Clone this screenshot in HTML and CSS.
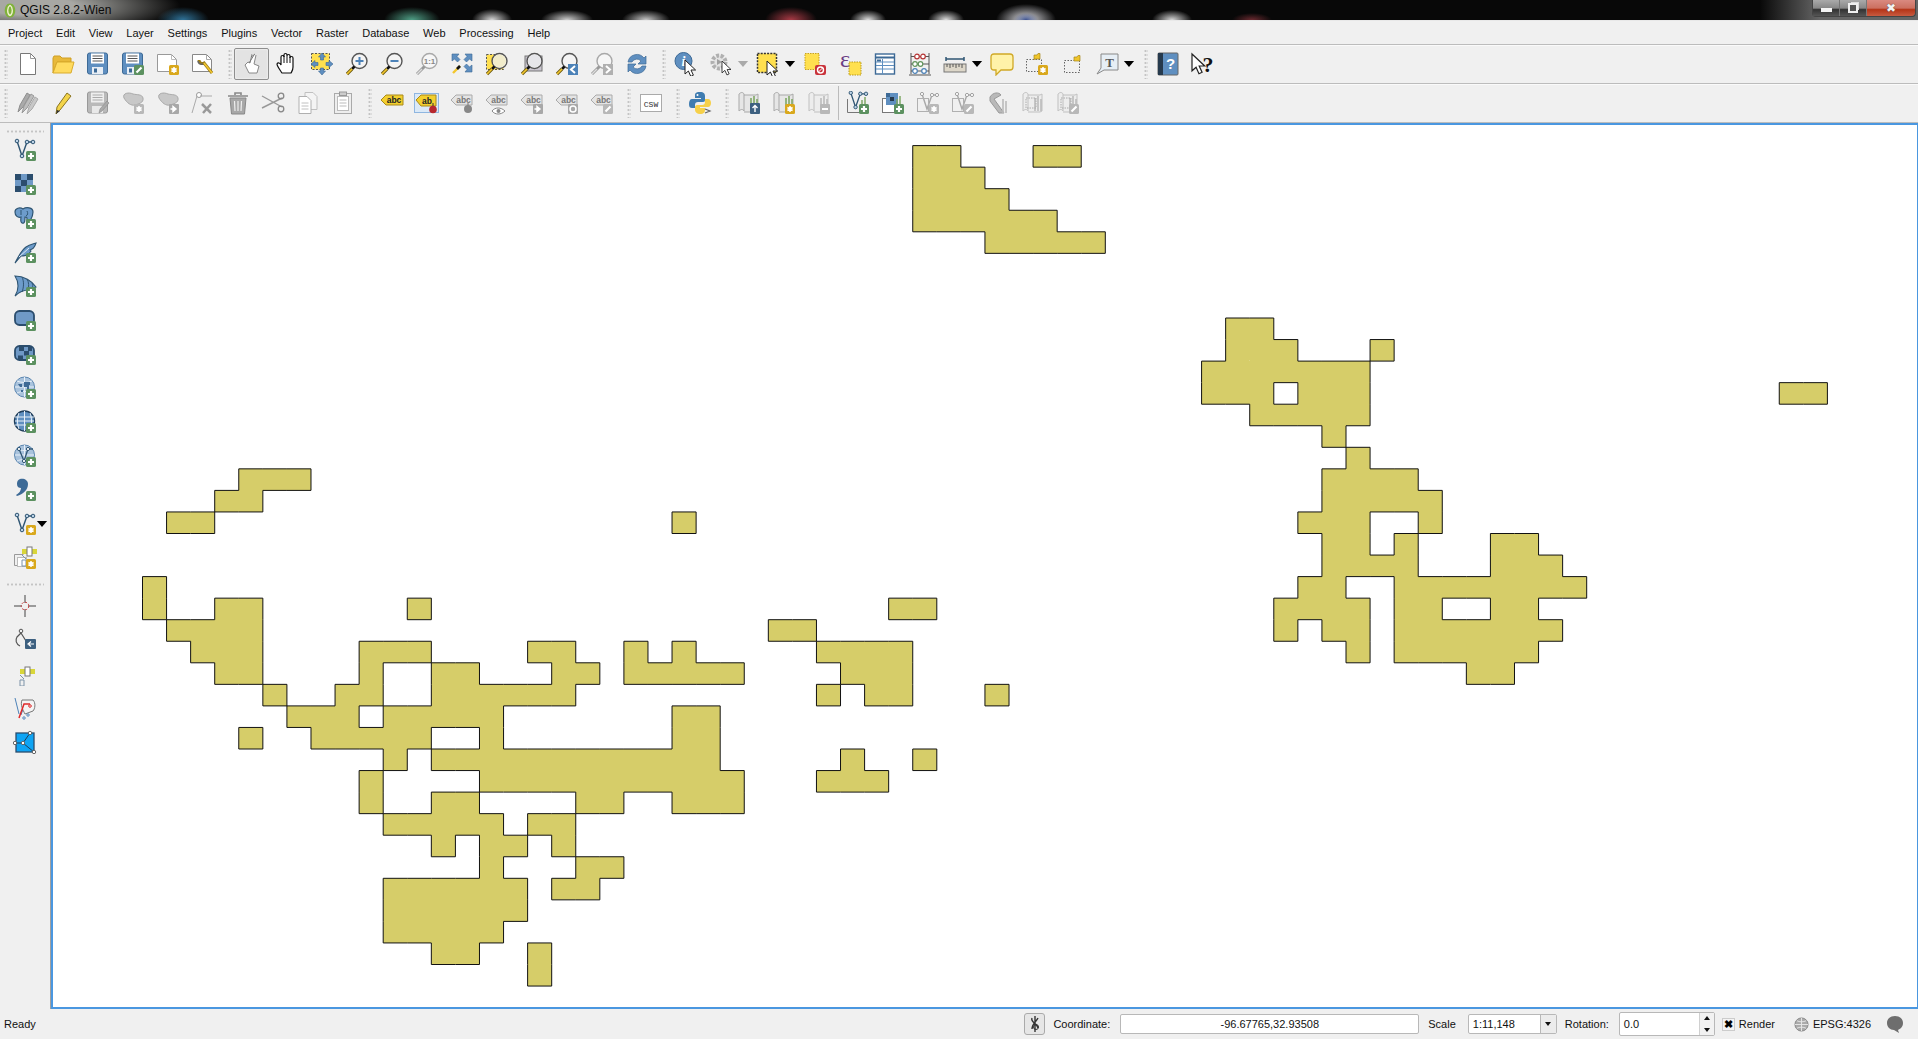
FILE: index.html
```html
<!DOCTYPE html>
<html lang="en">
<head>
    <meta charset="UTF-8">
    <title>QGIS 2.8.2-Wien</title>
    <link rel="stylesheet" href="styles.css">
</head>
<body>
<!-- shared icon parts -->
<svg class="defs" xmlns="http://www.w3.org/2000/svg">
  <defs>
    <g id="b-plus"><rect x="13" y="13" width="10" height="10" rx="1.5" fill="#5c9160"/><path d="M18 15v6M15 18h6" stroke="#fff" stroke-width="2.2"/></g>
    <g id="b-star"><rect x="13" y="13" width="10" height="10" rx="1.5" fill="#d9a81c"/><path d="M18 15v6M15.4 16.5l5.2 3M15.4 19.5l5.2-3" stroke="#fff" stroke-width="1.5"/></g>
    <g id="b-star-off"><rect x="13" y="13" width="10" height="10" rx="1.5" fill="#b8b8b8"/><path d="M18 15v6M15.4 16.5l5.2 3M15.4 19.5l5.2-3" stroke="#fff" stroke-width="1.5"/></g>
    <g id="b-pen-off"><rect x="13" y="13" width="10" height="10" rx="1.5" fill="#b8b8b8"/><path d="M15.5 20.5l5-5" stroke="#fff" stroke-width="2.2"/></g>
    <g id="b-arrow-off"><rect x="13" y="13" width="10" height="10" rx="1" fill="#a8a8a8"/><path d="M14.5 18h4M17 15.5l3 2.5-3 2.5z" stroke="#fff" fill="#fff" stroke-width="1.4"/></g>
    <g id="p-glass"><circle cx="14.5" cy="9" r="7.5" fill="#f4f4f4" stroke="#555" stroke-width="1.4"/><path d="M9.5 14.5L7 17" stroke="#111" stroke-width="2.6"/><path d="M7 17l-5 5" stroke="#6d5a10" stroke-width="3.2"/><path d="M7 17l-5 5" stroke="#f3c72e" stroke-width="1.6"/></g>
    <g id="p-glass-off"><circle cx="14.5" cy="9" r="7.5" fill="#f6f6f6" stroke="#a8a8a8" stroke-width="1.4"/><path d="M9.5 14.5L2 22" stroke="#999" stroke-width="3"/><path d="M7 17l-5 5" stroke="#ddd" stroke-width="1.4"/></g>
    <g id="p-cursor"><path d="M0 0v14l3.4-3 2.4 5.4 2.6-1.2-2.4-5.2h4.6z" fill="#fff" stroke="#222" stroke-width="1"/></g>
    <g id="p-floppy"><rect x="1.5" y="1" width="20" height="21" rx="2" fill="#5f8fc0" stroke="#3d6a96"/><rect x="5" y="1.5" width="13" height="10" fill="#fff"/><path d="M6.5 4h10M6.5 6.500h10M6.500 9h10" stroke="#555"/><rect x="6" y="15" width="11" height="7" fill="#e8eef5"/><rect x="8" y="16.500" width="3" height="4" fill="#3d6a96"/></g>
    <g id="p-floppy-off"><rect x="1.500" y="1" width="20" height="21" rx="2" fill="#b9b9b9" stroke="#999"/><rect x="5" y="1.500" width="13" height="10" fill="#eee"/><path d="M6.500 4h10M6.500 6.500h10M6.500 9h10" stroke="#aaa"/><rect x="6" y="15" width="11" height="7" fill="#e8e8e8"/></g>
    <g id="p-blob"><path d="M3 7C1 2 8 1 12 3c4 1 9 0 10 4 1 5-5 6-8 7-4 1-8-2-11-7z" fill="#c8c8c8" stroke="#aaa"/></g>
    <g id="p-tag"><path d="M1 9l5-5h16v10H6z" fill="#e4e4e4" stroke="#aaa"/><text x="13.500" y="12.200" class="ic-abc ic-off">abc</text></g>
    <g id="p-scroll"><path d="M2 3c2-2 4-2 5 0v17c-1-2-3-2-5 0zM7 4h12l2-1v17l-2 1H7" fill="#e6e6e6" stroke="#a8a8a8"/><path d="M14 20V7M17 20V5M20 20V8" stroke="#7fa865" stroke-width="1.6"/></g>
    <g id="p-scroll-off"><path d="M2 3c2-2 4-2 5 0v17c-1-2-3-2-5 0zM7 4h12l2-1v17l-2 1H7" fill="#ededed" stroke="#c0c0c0"/><path d="M14 20V7M17 20V5M20 20V8" stroke="#bbb" stroke-width="1.6"/></g>
    <g id="p-dash"><rect x="1.500" y="7.500" width="15" height="12" fill="none" stroke="#666" stroke-dasharray="1.500 1.500"/></g>
    <g id="p-node"><path d="M4 3l5 15 5-14h6" fill="none" stroke="#2f5573" stroke-width="1.4"/><circle cx="4" cy="3" r="1.800" fill="#bcd2e6" stroke="#2f5573"/><circle cx="9" cy="18" r="1.800" fill="#bcd2e6" stroke="#2f5573"/><circle cx="14" cy="4" r="1.800" fill="#bcd2e6" stroke="#2f5573"/><circle cx="20" cy="4" r="1.800" fill="#bcd2e6" stroke="#2f5573"/></g>
    <g id="p-node-off"><path d="M6 3l5 15 5-14h5" fill="none" stroke="#a8a8a8" stroke-width="1.400"/><rect x="1.500" y="7.500" width="11" height="13" fill="none" stroke="#b0b0b0"/><circle cx="6" cy="3" r="1.600" fill="#fff" stroke="#a0a0a0"/><circle cx="16" cy="4" r="1.600" fill="#fff" stroke="#a0a0a0"/><circle cx="21" cy="4" r="1.600" fill="#fff" stroke="#a0a0a0"/></g>
    <g id="p-globe"><circle cx="11.500" cy="11" r="10" fill="#a9c3dd" stroke="#5b86b0"/><path d="M2 11h19M11.500 1v20M4 5c4 2 11 2 15 0M4 17c4-2 11-2 15 0" stroke="#e8f0f8" fill="none"/></g>
    <g id="p-bars"><rect x="4" y="3" width="15" height="5" fill="#d9d63a"/><rect x="9" y="1" width="5" height="9" fill="#fff" stroke="#777"/><path d="M4 9l4 4M4 14h4v6H4z" fill="none" stroke="#7d93a8"/></g>

    <!-- main toolbar -->
    <g id="i-new"><path d="M4.500 1.500h10l5 5v16h-15z" fill="#fff" stroke="#777"/><path d="M14.500 1.500v5h5" fill="none" stroke="#999"/></g>
    <g id="i-open"><path d="M2 21V6l1-2h6l2 2h9v4H6z" fill="#e8b93a" stroke="#cf9f25"/><path d="M2 21l4-11h17l-3 11z" fill="#ffdb5f" stroke="#d9ab2c"/></g>
    <g id="i-save"><use href="#p-floppy"/></g>
    <g id="i-saveas"><use href="#p-floppy"/><rect x="13" y="13" width="10" height="10" rx="1.500" fill="#5c9160"/><path d="M15.500 20.500l5-5" stroke="#fff" stroke-width="2.200"/></g>
    <g id="i-composer"><path d="M1.500 2.500h14l5 5v12h-19z" fill="#fff" stroke="#999"/><path d="M15.500 2.500v5h5" fill="none" stroke="#bbb"/><use href="#b-star"/></g>
    <g id="i-manager"><path d="M1.500 2.500h14l5 5v12h-19z" fill="#fff" stroke="#888"/><path d="M15.500 2.500v5h5" fill="none" stroke="#aaa"/><path d="M8 8c0 3 3 4 5 3l8 10" fill="none" stroke="#9a7c1a" stroke-width="3"/><path d="M13 11l8 10" stroke="#f3c72e" stroke-width="1.600"/><path d="M7 9c0 2 2 4 5 3" fill="none" stroke="#666" stroke-width="1.500"/></g>
    <g id="i-touch"><path d="M12 2l-2 9-2-1-3 3 4 8h8l2-7-5-2 2-9" fill="#fff" stroke="#888"/><path d="M9 11l5-8M11 5l4-3" stroke="#777" fill="none"/></g>
    <g id="i-pan"><path d="M7 21c-2-3-5-7-5-9 1-2 3-1 4 1V5c0-2 3-2 3 0V3c0-2 3-2 3 0v1c0-2 3-2 3 0v2c0-2 3-2 3 0v9c0 3-1 4-2 6z" fill="#fff" stroke="#111" stroke-width="1.200"/><path d="M9 4v7M12 4v7M15 5v6" stroke="#111"/></g>
    <g id="i-pansel"><rect x="1.500" y="1.500" width="18" height="16" fill="#ffe04f" stroke="#555" stroke-dasharray="2 1.500"/><path d="M12 1l3.500 4h-2v3h-3V5h-2zM12 23l3.500-4h-2v-3h-3v3h-2zM1 12l4-3.500v2h3v3H5v2zM23 12l-4-3.500v2h-3v3h3v2z" fill="#5f8fc0" stroke="#3d6a96" stroke-width=".6"/></g>
    <g id="i-zoomin"><use href="#p-glass"/><path d="M14.500 5v8M10.500 9h8" stroke="#4c82b8" stroke-width="2"/></g>
    <g id="i-zoomout"><use href="#p-glass"/><path d="M10.500 9h8" stroke="#4c82b8" stroke-width="2"/></g>
    <g id="i-zoom11"><use href="#p-glass-off"/><text x="14.500" y="12" class="ic-tiny ic-off">1:1</text></g>
    <g id="i-zoomfull"><path d="M2 2h7L7 4.500l3 3L7.500 10l-3-3L2 9zM22 2h-7l2 2.500-3 3 2.500 2.500 3-3L22 9zM22 20h-7l2-2.500-3-3 2.500-2.500 3 3L22 13z" fill="#5f8fc0" stroke="#3d6a96" stroke-width=".6"/><path d="M10 14l-7 7" stroke="#f3c72e" stroke-width="2.400"/><path d="M10 14l-3 3" stroke="#111" stroke-width="2.600"/></g>
    <g id="i-zoomsel"><rect x="1.500" y="2.500" width="17" height="15" fill="#ffe04f" stroke="#555" stroke-dasharray="2 1.500"/><use href="#p-glass"/><circle cx="14.500" cy="9" r="6.500" fill="#f1eccb"/></g>
    <g id="i-zoomlayer"><rect x="5" y="4" width="17" height="15" fill="#c9c5cf" stroke="#777"/><use href="#p-glass"/><circle cx="14.500" cy="9" r="6.500" fill="#e6e6ea"/></g>
    <g id="i-zoomlast"><use href="#p-glass"/><rect x="13" y="12" width="10" height="11" fill="#4c82b8"/><path d="M20 14l-4 3.500 4 3.500" fill="none" stroke="#fff" stroke-width="2"/></g>
    <g id="i-zoomnext"><use href="#p-glass-off"/><rect x="13" y="12" width="10" height="11" fill="#b0b0b0"/><path d="M16 14l4 3.500-4 3.500" fill="none" stroke="#fff" stroke-width="2"/></g>
    <g id="i-refresh"><path d="M3 10a9 9 0 0 1 16-4l2-2v8h-8l3-3a5.500 5.500 0 0 0-9 1z" fill="#5f8fc0" stroke="#3d6a96" stroke-width=".7"/><path d="M21 14a9 9 0 0 1-16 4l-2 2v-8h8l-3 3a5.500 5.500 0 0 0 9-1z" fill="#5f8fc0" stroke="#3d6a96" stroke-width=".7"/></g>
    <g id="i-identify"><circle cx="9.500" cy="9" r="8.500" fill="#5f8fc0" stroke="#3d6a96"/><text x="9.500" y="14" class="ic-info">i</text><use href="#p-cursor" transform="translate(11 8)"/></g>
    <g id="i-action"><circle cx="10" cy="10" r="6.500" fill="#e4e4e4" stroke="#b0b0b0" stroke-width="4" stroke-dasharray="3 1.500"/><path d="M8 7l5 3-5 3z" fill="#a0a0a0"/><use href="#p-cursor" transform="translate(13 9) scale(.85)"/></g>
    <g id="i-select"><rect x="1.500" y="1.500" width="19" height="19" fill="#ffe04f" stroke="#333" stroke-width="1.500" stroke-dasharray="2 1.200"/><use href="#p-cursor" transform="translate(11 9)"/></g>
    <g id="i-deselect"><rect x="2" y="1.500" width="14" height="16" fill="#ffe04f" stroke="#c9a21c" stroke-dasharray="1.500 1"/><rect x="12" y="13" width="11" height="10" rx="2" fill="#c9333b"/><circle cx="17.500" cy="18" r="3" fill="none" stroke="#fff" stroke-width="1.400"/><path d="M15.500 20l4-4" stroke="#fff"/></g>
    <g id="i-expr"><rect x="11" y="10" width="12" height="13" fill="#ffe04f" stroke="#b99a1f" stroke-dasharray="1.500 1"/><text x="7" y="15" class="ic-eps">&#949;</text></g>
    <g id="i-table"><rect x="2.500" y="2" width="19" height="20" fill="#fff" stroke="#3d6a96" stroke-width="1.400"/><path d="M3 5.500h18" stroke="#3d6a96" stroke-width="2"/><path d="M3 10h18M3 13.500h18M3 17h18M9.500 7v15" stroke="#5f8fc0"/><rect x="4" y="7.500" width="4" height="2" fill="#3d6a96"/></g>
    <g id="i-calc"><path d="M3 1v21M21 1v21M1 23h22M3 4.500h18M3 12h18M3 19h18" stroke="#555" fill="none"/><circle cx="9" cy="4.500" r="2.300" fill="#fff" stroke="#b53535" stroke-width="1.200"/><circle cx="15" cy="4.500" r="2.300" fill="#fff" stroke="#b53535" stroke-width="1.200"/><circle cx="7" cy="12" r="2.300" fill="#fff" stroke="#63955e" stroke-width="1.200"/><circle cx="12.500" cy="12" r="2.300" fill="#fff" stroke="#63955e" stroke-width="1.200"/><circle cx="7" cy="19" r="2.300" fill="#fff" stroke="#4c82b8" stroke-width="1.200"/><circle cx="16" cy="19" r="2.300" fill="#fff" stroke="#4c82b8" stroke-width="1.200"/></g>
    <g id="i-measure"><path d="M3 5v4M21 5v4M3 7h18" stroke="#2f5573" stroke-width="1.500"/><rect x="1" y="12" width="22" height="8" fill="#ddd7c9" stroke="#777"/><path d="M4 12v3M7 12v4M10 12v3M13 12v4M16 12v3M19 12v4" stroke="#555"/></g>
    <g id="i-tip"><path d="M4 2h16q3 0 3 3v10q0 3-3 3h-9l-5 5v-5H4q-3 0-3-3V5q0-3 3-3z" fill="#fff2a8" stroke="#d0a826" stroke-width="1.300"/></g>
    <g id="i-newbook"><use href="#p-dash"/><path d="M9 8V3h3l1-1.500h2V7H9z" fill="#f0c52a" stroke="#a8861a" stroke-width=".7"/><use href="#b-star"/></g>
    <g id="i-book"><use href="#p-dash" transform="translate(3 1)"/><path d="M14 9V5h3l1-1.500h2V9z" fill="#f0c52a" stroke="#a8861a" stroke-width=".7"/></g>
    <g id="i-annot"><path d="M6 2h17v16H9l-7 4 4-6z" fill="#e6eef5" stroke="#888"/><text x="14.500" y="14.500" class="ic-t">T</text></g>
    <g id="i-help"><rect x="2" y="1" width="20" height="22" rx="1" fill="#5f8fc0" stroke="#666"/><rect x="2" y="1" width="5" height="22" fill="#263a4d"/><text x="14.500" y="17" class="ic-help">?</text></g>
    <g id="i-what"><use href="#p-cursor" transform="translate(1 2) scale(1.200)"/><text x="17" y="20" class="ic-what">?</text></g>

    <!-- digitising and label toolbar -->
    <g id="i-edits"><path d="M2 21l2-7 7-12 3 2-7 12z" fill="#aaa" stroke="#8e8e8e"/><path d="M6 22l2-7 7-12 3 2-7 12z" fill="#bdbdbd" stroke="#999"/><path d="M11 23l2-7 6-10 3 2-6 10z" fill="#c8c8c8" stroke="#aaa"/></g>
    <g id="i-pencil"><path d="M5 23l1-7L16 2l4 3L9 19z" fill="#f3d44a" stroke="#8a7420"/><path d="M5 23l1-4 3 1z" fill="#333"/></g>
    <g id="i-saveedit"><use href="#p-floppy-off"/><path d="M13 22l1-4 7-8 2 2-7 8z" fill="#aaa" stroke="#888" stroke-width=".6"/></g>
    <g id="i-addfeat"><use href="#p-blob"/><use href="#b-star-off"/></g>
    <g id="i-movefeat"><use href="#p-blob"/><use href="#b-arrow-off"/></g>
    <g id="i-nodetool"><path d="M6 5l-5 17" stroke="#aaa"/><circle cx="8" cy="4" r="2.500" fill="#fff" stroke="#999"/><path d="M9 5h12" stroke="#aaa"/><path d="M11 13l9 9M20 13l-8 9" stroke="#999" stroke-width="2.500"/></g>
    <g id="i-trash"><path d="M4 7h16l-1.500 16h-13z" fill="#a8a8a8" stroke="#888"/><path d="M2 5h20M9 4V2h6v2" fill="none" stroke="#888" stroke-width="1.600"/><path d="M8.500 10l.5 10M12 10v10M15.500 10l-.5 10" stroke="#eee" stroke-width="1.200"/></g>
    <g id="i-cut"><path d="M1 5l20 11M1 17L21 7" stroke="#999" stroke-width="1.400"/><circle cx="20" cy="18" r="2.800" fill="none" stroke="#888" stroke-width="1.300"/><circle cx="20" cy="5" r="2.800" fill="none" stroke="#888" stroke-width="1.300"/></g>
    <g id="i-copy"><path d="M9 1.500h8l4 4v13H9z" fill="#f4f4f4" stroke="#c0c0c0"/><path d="M3 5.500h8l4 4v13H3z" fill="#fff" stroke="#b0b0b0"/><path d="M5.500 12h7M5.500 15h7M5.500 18h7" stroke="#c0c0c0"/></g>
    <g id="i-paste"><rect x="3.500" y="2.500" width="17" height="20" fill="#eee" stroke="#aaa"/><rect x="6.500" y="5.500" width="11" height="14" fill="#fff" stroke="#bbb"/><rect x="8.500" y="1" width="7" height="3.500" fill="#ccc" stroke="#999"/><path d="M8.500 9h7M8.500 12h7M8.500 15h7" stroke="#bbb"/></g>
    <g id="i-label"><path d="M1 9l5-5h17v10H6z" fill="#f3cf2e" stroke="#a8891a"/><text x="14" y="12.200" class="ic-abc">abc</text></g>
    <g id="i-pin"><path d="M1 9l5-5h15v11H6z" fill="#f3cf2e" stroke="#a8891a"/><text x="12" y="12.500" class="ic-abc">ab</text><path d="M18 12v4" stroke="#333"/><circle cx="18" cy="18.500" r="3.800" fill="#b8282e"/></g>
    <g id="i-pinoff"><use href="#p-tag"/><path d="M18 12v4" stroke="#777"/><circle cx="18" cy="18" r="4" fill="#888"/></g>
    <g id="i-show"><use href="#p-tag"/><path d="M7 20c3-4 9-4 13 0-4 4-10 4-13 0z" fill="#fff" stroke="#888"/><circle cx="13.500" cy="20" r="2" fill="#888"/></g>
    <g id="i-labmove"><use href="#p-tag"/><use href="#b-arrow-off"/></g>
    <g id="i-labrot"><use href="#p-tag"/><rect x="13" y="13" width="10" height="10" rx="1" fill="#a8a8a8"/><circle cx="18" cy="18" r="3" fill="none" stroke="#fff" stroke-width="1.500"/></g>
    <g id="i-labedit"><use href="#p-tag"/><use href="#b-pen-off"/></g>
    <g id="i-csw"><rect x="1.500" y="3.500" width="21" height="17" fill="#fff" stroke="#aaa"/><text x="12" y="15.500" class="ic-csw">CSW</text></g>
    <g id="i-python"><path d="M12 1c-5 0-5 2-5 4v2h6v1H4c-2 0-3 2-3 5s1 4 3 4h3v-3c0-2 1-3 3-3h5c2 0 2-1 2-3V5c0-2-1-4-5-4z" fill="#3f7cb0"/><circle cx="9.500" cy="4" r="1" fill="#fff"/><path d="M17 8v3c0 2-1 3-3 3H9c-1 0-2 1-2 2v3c0 2 2 4 5 4 4 0 5-2 5-4v-2h-5v-1h8c2 0 3-2 3-4s-1-4-3-4z" fill="#f6d049"/><path d="M17 18l5 2-5 2" fill="none" stroke="#666" stroke-width="1.200"/></g>
    <g id="i-grassopen"><use href="#p-scroll"/><rect x="13" y="12" width="10" height="11" rx="1" fill="#3d6080"/><path d="M18 21v-6M15.500 17l2.500-2.500 2.500 2.500" fill="none" stroke="#fff" stroke-width="1.400"/></g>
    <g id="i-grassnew"><use href="#p-scroll"/><use href="#b-star"/></g>
    <g id="i-grassclose"><use href="#p-scroll-off"/><rect x="13" y="13" width="10" height="10" rx="1" fill="#b8b8b8"/><path d="M15 18h6" stroke="#fff" stroke-width="2"/></g>
    <g id="i-addgrassv"><path d="M1.500 8v13.500h12" fill="none" stroke="#777"/><use href="#p-node" transform="translate(1 -1) scale(.95)"/><path d="M16 17v-8M19 17V6" stroke="#7fa865" stroke-width="1.500"/><use href="#b-plus"/></g>
    <g id="i-addgrassr"><rect x="1.500" y="7.500" width="12" height="14" fill="#fff" stroke="#777"/><rect x="5" y="2" width="12" height="12" fill="#5f8fc0"/><rect x="9" y="6" width="4" height="4" fill="#263a4d"/><rect x="5" y="2" width="4" height="4" fill="#3d6a96"/><path d="M16 17V8M19 17V5" stroke="#7fa865" stroke-width="1.500"/><use href="#b-plus"/></g>
    <g id="i-grassv1"><use href="#p-node-off"/><use href="#b-star-off"/></g>
    <g id="i-grassv2"><use href="#p-node-off"/><use href="#b-pen-off"/></g>
    <g id="i-grasstools"><path d="M4 6c3-5 9-5 11-2L8 8l10 14h-5L4 10z" fill="#b9b9b9" stroke="#999"/><path d="M17 22V8M20 22V10" stroke="#bbb" stroke-width="1.600"/></g>
    <g id="i-grassreg"><use href="#p-scroll-off"/><rect x="5" y="7" width="10" height="10" fill="none" stroke="#aaa" stroke-dasharray="1.500 1"/></g>
    <g id="i-grassregedit"><use href="#p-scroll-off"/><rect x="5" y="7" width="10" height="10" fill="none" stroke="#aaa" stroke-dasharray="1.500 1"/><use href="#b-pen-off"/></g>

    <!-- data source toolbar -->
    <g id="l-vector"><use href="#p-node"/><use href="#b-plus"/></g>
    <g id="l-raster"><rect x="2" y="2" width="18" height="18" fill="#6f99c6"/><path d="M2 2h6v6H2zM14 2h6v6h-6zM8 8h6v6H8zM2 14h6v6H2zM14 14h6v6h-6z" fill="#2b4d6d"/><use href="#b-plus"/></g>
    <g id="l-pg"><path d="M2 6c0-4 5-5 8-3 3-2 10-2 10 3 0 4-2 7-3 9-1 2-3 1-3-1 0-3 0-3-2-3 0 3 0 7-3 6-2-1-1-5-1-6-3 1-6-1-6-5z" fill="#6d9ccb" stroke="#2f5573" stroke-width="1.200"/><path d="M8 4v5M14 5c1 2 1 4-1 5" stroke="#2f5573" fill="none"/><use href="#b-plus"/></g>
    <g id="l-feather"><path d="M2 23c3-6 7-13 11-16 3-2 7-3 10-4-1 3-2 5-4 6l-2 1 1 1c-2 4-6 5-10 5-2 2-4 5-6 7z" fill="#6d9ccb" stroke="#2f5573" stroke-width="1.100"/><path d="M6 17l10-9" stroke="#dce8f4"/><use href="#b-plus"/></g>
    <g id="l-sail"><path d="M2 2c9 0 17 5 21 11l-7 3c-5 0-10 2-14 6 4-6 4-14 0-20z" fill="#6d9ccb" stroke="#2f5573" stroke-width="1.100"/><path d="M9 3c2 4 2 10 0 15M14 5c2 3 2 8 1 11M19 9c1 2 1 3 0 5" stroke="#2f5573" fill="none"/><use href="#b-plus"/></g>
    <g id="l-oracle"><rect x="2" y="3" width="19" height="14" rx="4.500" fill="#6f99c6" stroke="#2b4d6d" stroke-width="1.800"/><use href="#b-plus"/></g>
    <g id="l-oraster"><rect x="2" y="4" width="19" height="14" rx="4.500" fill="#6f99c6" stroke="#2b4d6d" stroke-width="1.800"/><path d="M6 4.500h5v4.500H6zM11 9h5v4.500h-5zM15 4.500h4V9h-4zM5 13.500h5V17H5z" fill="#2b4d6d"/><use href="#b-plus"/></g>
    <g id="l-wms"><use href="#p-globe"/><path d="M5 8h4v3H7zM11 6h6v3h-1v5h-2v-3h-3zM8 14h2v2H8z" fill="#3d6a96"/><use href="#b-plus"/></g>
    <g id="l-wcs"><circle cx="11.500" cy="11" r="10" fill="#5f8fc0" stroke="#1f3d5a" stroke-width="1.400"/><path d="M2 11h19M2 7h19M2 15h19M11.500 1v20M6 3c-2 5-2 11 0 16M17 3c2 5 2 11 0 16" stroke="#e8f0f8" fill="none"/><use href="#b-plus"/></g>
    <g id="l-wfs"><use href="#p-globe"/><path d="M6 5l5 12 4-12h5" fill="none" stroke="#2f5573" stroke-width="1.300"/><circle cx="6" cy="5" r="1.600" fill="#fff" stroke="#2f5573"/><circle cx="11" cy="17" r="1.600" fill="#fff" stroke="#2f5573"/><circle cx="15" cy="5" r="1.600" fill="#fff" stroke="#2f5573"/><use href="#b-plus"/></g>
    <g id="l-comma"><path d="M7 1c4-1 8 1 8 5 0 6-5 10-11 12l-1-1c3-2 5-4 5-7-2 0-4-1-4-4 0-3 1-4 3-5z" fill="#3d6a96"/><use href="#b-plus"/></g>
    <g id="l-shape"><use href="#p-node"/><use href="#b-star"/></g>
    <g id="l-compose"><path d="M1.500 8.500h9M1.500 8.500v11h14v-3" fill="none" stroke="#999"/><rect x="4.500" y="11.500" width="9" height="9" fill="#fff" stroke="#bbb"/><use href="#p-bars" transform="translate(5 0)"/><use href="#b-star"/></g>
    <g id="l-cross"><path d="M12 1v8M12 15v8M1 12h8M15 12h8" stroke="#444"/><circle cx="12" cy="12" r="3.800" fill="none" stroke="#c84040" stroke-dasharray="2 1.500"/></g>
    <g id="l-compass"><circle cx="8" cy="3" r="1.800" fill="none" stroke="#555"/><path d="M8 5L4 9c-2 3-1 7 3 9M8 5l5 8" fill="none" stroke="#555" stroke-width="1.200"/><rect x="12" y="11" width="11" height="10" rx="1" fill="#3d6080"/><path d="M21 16h-5M18 13.500l-3 2.500 3 2.500" fill="none" stroke="#fff" stroke-width="1.200"/></g>
    <g id="l-bars"><use href="#p-bars" transform="translate(3 4)"/></g>
    <g id="l-topo"><path d="M2 2l4 16M8 19l4-12 5-1" fill="none" stroke="#4c82b8"/><path d="M9 4h11c3 3 2 9 0 11l-8 3c-2-4-5-9-3-14z" fill="#f4f4f4" stroke="#777"/><path d="M6 22l5-14h6" fill="none" stroke="#e02a2a" stroke-width="1.500"/><circle cx="17" cy="10" r="1.300" fill="none" stroke="#e02a2a"/><circle cx="11" cy="22" r="1.200" fill="#fff" stroke="#4c82b8"/><circle cx="15" cy="19" r="1.200" fill="#fff" stroke="#4c82b8"/></g>
    <g id="l-square"><rect x="3" y="3" width="18" height="19" fill="#0ea4f4" stroke="#2b4d6d" stroke-width="1.300"/><path d="M2 13h8l7-10M10 13l6 5 5 4" fill="none" stroke="#1f3d5a"/><circle cx="2" cy="13" r="1.700" fill="#fff" stroke="#666"/><circle cx="10" cy="13" r="1.700" fill="#fff" stroke="#666"/><circle cx="17" cy="3" r="1.700" fill="#fff" stroke="#666"/><circle cx="21" cy="22" r="1.700" fill="#fff" stroke="#666"/></g>
  </defs>
</svg>

<div class="app">
    <div class="titlebar">
        <svg class="logo" viewBox="0 0 16 18"><path d="M8 1c4 0 6 4 6 8s-2 8-6 8-6-4-6-8 2-8 6-8z" fill="#7fb23a"/><path d="M8 3C5 5 4 12 8 15M8 3c3 2 4 9 0 12" fill="none" stroke="#f2f2d0" stroke-width="1.500"/></svg>
        <span class="title">QGIS 2.8.2-Wien</span>
        <div class="winbtns">
            <span class="winbtn"><i class="min-glyph"></i></span>
            <span class="winbtn"><i class="max-glyph"></i></span>
            <span class="winbtn close">&#10006;</span>
        </div>
    </div>

    <div class="menubar">
        <span>Project</span><span>Edit</span><span>View</span><span>Layer</span><span>Settings</span><span>Plugins</span><span>Vector</span><span>Raster</span><span>Database</span><span>Web</span><span>Processing</span><span>Help</span>
    </div>

    <div class="toolbar">
        <i class="grip first"></i>
        <button class="tbtn"><svg class="ico" viewBox="0 0 24 24"><use href="#i-new"/></svg></button>
        <button class="tbtn"><svg class="ico" viewBox="0 0 24 24"><use href="#i-open"/></svg></button>
        <button class="tbtn"><svg class="ico" viewBox="0 0 24 24"><use href="#i-save"/></svg></button>
        <button class="tbtn"><svg class="ico" viewBox="0 0 24 24"><use href="#i-saveas"/></svg></button>
        <button class="tbtn"><svg class="ico" viewBox="0 0 24 24"><use href="#i-composer"/></svg></button>
        <button class="tbtn"><svg class="ico" viewBox="0 0 24 24"><use href="#i-manager"/></svg></button>
        <i class="grip"></i>
        <button class="tbtn active"><svg class="ico" viewBox="0 0 24 24"><use href="#i-touch"/></svg></button>
        <button class="tbtn"><svg class="ico" viewBox="0 0 24 24"><use href="#i-pan"/></svg></button>
        <button class="tbtn"><svg class="ico" viewBox="0 0 24 24"><use href="#i-pansel"/></svg></button>
        <button class="tbtn"><svg class="ico" viewBox="0 0 24 24"><use href="#i-zoomin"/></svg></button>
        <button class="tbtn"><svg class="ico" viewBox="0 0 24 24"><use href="#i-zoomout"/></svg></button>
        <button class="tbtn"><svg class="ico" viewBox="0 0 24 24"><use href="#i-zoom11"/></svg></button>
        <button class="tbtn"><svg class="ico" viewBox="0 0 24 24"><use href="#i-zoomfull"/></svg></button>
        <button class="tbtn"><svg class="ico" viewBox="0 0 24 24"><use href="#i-zoomsel"/></svg></button>
        <button class="tbtn"><svg class="ico" viewBox="0 0 24 24"><use href="#i-zoomlayer"/></svg></button>
        <button class="tbtn"><svg class="ico" viewBox="0 0 24 24"><use href="#i-zoomlast"/></svg></button>
        <button class="tbtn"><svg class="ico" viewBox="0 0 24 24"><use href="#i-zoomnext"/></svg></button>
        <button class="tbtn"><svg class="ico" viewBox="0 0 24 24"><use href="#i-refresh"/></svg></button>
        <i class="grip"></i>
        <button class="tbtn"><svg class="ico" viewBox="0 0 24 24"><use href="#i-identify"/></svg></button>
        <button class="tbtn"><svg class="ico" viewBox="0 0 24 24"><use href="#i-action"/></svg></button>
        <i class="arrow off"></i>
        <button class="tbtn"><svg class="ico" viewBox="0 0 24 24"><use href="#i-select"/></svg></button>
        <i class="arrow"></i>
        <button class="tbtn"><svg class="ico" viewBox="0 0 24 24"><use href="#i-deselect"/></svg></button>
        <button class="tbtn"><svg class="ico" viewBox="0 0 24 24"><use href="#i-expr"/></svg></button>
        <button class="tbtn"><svg class="ico" viewBox="0 0 24 24"><use href="#i-table"/></svg></button>
        <button class="tbtn"><svg class="ico" viewBox="0 0 24 24"><use href="#i-calc"/></svg></button>
        <button class="tbtn"><svg class="ico" viewBox="0 0 24 24"><use href="#i-measure"/></svg></button>
        <i class="arrow"></i>
        <button class="tbtn"><svg class="ico" viewBox="0 0 24 24"><use href="#i-tip"/></svg></button>
        <button class="tbtn"><svg class="ico" viewBox="0 0 24 24"><use href="#i-newbook"/></svg></button>
        <button class="tbtn"><svg class="ico" viewBox="0 0 24 24"><use href="#i-book"/></svg></button>
        <button class="tbtn"><svg class="ico" viewBox="0 0 24 24"><use href="#i-annot"/></svg></button>
        <i class="arrow"></i>
        <i class="grip"></i>
        <button class="tbtn"><svg class="ico" viewBox="0 0 24 24"><use href="#i-help"/></svg></button>
        <button class="tbtn"><svg class="ico" viewBox="0 0 24 24"><use href="#i-what"/></svg></button>
    </div>

    <div class="toolbar">
        <i class="grip first"></i>
        <button class="tbtn"><svg class="ico" viewBox="0 0 24 24"><use href="#i-edits"/></svg></button>
        <button class="tbtn"><svg class="ico" viewBox="0 0 24 24"><use href="#i-pencil"/></svg></button>
        <button class="tbtn"><svg class="ico" viewBox="0 0 24 24"><use href="#i-saveedit"/></svg></button>
        <button class="tbtn"><svg class="ico" viewBox="0 0 24 24"><use href="#i-addfeat"/></svg></button>
        <button class="tbtn"><svg class="ico" viewBox="0 0 24 24"><use href="#i-movefeat"/></svg></button>
        <button class="tbtn"><svg class="ico" viewBox="0 0 24 24"><use href="#i-nodetool"/></svg></button>
        <button class="tbtn"><svg class="ico" viewBox="0 0 24 24"><use href="#i-trash"/></svg></button>
        <button class="tbtn"><svg class="ico" viewBox="0 0 24 24"><use href="#i-cut"/></svg></button>
        <button class="tbtn"><svg class="ico" viewBox="0 0 24 24"><use href="#i-copy"/></svg></button>
        <button class="tbtn"><svg class="ico" viewBox="0 0 24 24"><use href="#i-paste"/></svg></button>
        <i class="grip"></i>
        <button class="tbtn"><svg class="ico" viewBox="0 0 24 24"><use href="#i-label"/></svg></button>
        <button class="tbtn checked"><svg class="ico" viewBox="0 0 24 24"><use href="#i-pin"/></svg></button>
        <button class="tbtn"><svg class="ico" viewBox="0 0 24 24"><use href="#i-pinoff"/></svg></button>
        <button class="tbtn"><svg class="ico" viewBox="0 0 24 24"><use href="#i-show"/></svg></button>
        <button class="tbtn"><svg class="ico" viewBox="0 0 24 24"><use href="#i-labmove"/></svg></button>
        <button class="tbtn"><svg class="ico" viewBox="0 0 24 24"><use href="#i-labrot"/></svg></button>
        <button class="tbtn"><svg class="ico" viewBox="0 0 24 24"><use href="#i-labedit"/></svg></button>
        <i class="grip"></i>
        <button class="tbtn"><svg class="ico" viewBox="0 0 24 24"><use href="#i-csw"/></svg></button>
        <i class="grip"></i>
        <button class="tbtn"><svg class="ico" viewBox="0 0 24 24"><use href="#i-python"/></svg></button>
        <i class="grip"></i>
        <button class="tbtn"><svg class="ico" viewBox="0 0 24 24"><use href="#i-grassopen"/></svg></button>
        <button class="tbtn"><svg class="ico" viewBox="0 0 24 24"><use href="#i-grassnew"/></svg></button>
        <button class="tbtn"><svg class="ico" viewBox="0 0 24 24"><use href="#i-grassclose"/></svg></button>
        <i class="vsep"></i>
        <button class="tbtn"><svg class="ico" viewBox="0 0 24 24"><use href="#i-addgrassv"/></svg></button>
        <button class="tbtn"><svg class="ico" viewBox="0 0 24 24"><use href="#i-addgrassr"/></svg></button>
        <button class="tbtn"><svg class="ico" viewBox="0 0 24 24"><use href="#i-grassv1"/></svg></button>
        <button class="tbtn"><svg class="ico" viewBox="0 0 24 24"><use href="#i-grassv2"/></svg></button>
        <button class="tbtn"><svg class="ico" viewBox="0 0 24 24"><use href="#i-grasstools"/></svg></button>
        <button class="tbtn"><svg class="ico" viewBox="0 0 24 24"><use href="#i-grassreg"/></svg></button>
        <button class="tbtn"><svg class="ico" viewBox="0 0 24 24"><use href="#i-grassregedit"/></svg></button>
    </div>

    <div class="workspace">
        <div class="sidebar">
            <i class="hgrip top"></i>
            <button class="sbtn"><svg class="ico" viewBox="0 0 24 24"><use href="#l-vector"/></svg></button>
            <button class="sbtn"><svg class="ico" viewBox="0 0 24 24"><use href="#l-raster"/></svg></button>
            <button class="sbtn"><svg class="ico" viewBox="0 0 24 24"><use href="#l-pg"/></svg></button>
            <button class="sbtn"><svg class="ico" viewBox="0 0 24 24"><use href="#l-feather"/></svg></button>
            <button class="sbtn"><svg class="ico" viewBox="0 0 24 24"><use href="#l-sail"/></svg></button>
            <button class="sbtn"><svg class="ico" viewBox="0 0 24 24"><use href="#l-oracle"/></svg></button>
            <button class="sbtn"><svg class="ico" viewBox="0 0 24 24"><use href="#l-oraster"/></svg></button>
            <button class="sbtn"><svg class="ico" viewBox="0 0 24 24"><use href="#l-wms"/></svg></button>
            <button class="sbtn"><svg class="ico" viewBox="0 0 24 24"><use href="#l-wcs"/></svg></button>
            <button class="sbtn"><svg class="ico" viewBox="0 0 24 24"><use href="#l-wfs"/></svg></button>
            <button class="sbtn"><svg class="ico" viewBox="0 0 24 24"><use href="#l-comma"/></svg></button>
            <button class="sbtn"><svg class="ico" viewBox="0 0 24 24"><use href="#l-shape"/></svg><i class="arrow"></i></button>
            <button class="sbtn"><svg class="ico" viewBox="0 0 24 24"><use href="#l-compose"/></svg></button>
            <i class="hgrip"></i>
            <button class="sbtn"><svg class="ico" viewBox="0 0 24 24"><use href="#l-cross"/></svg></button>
            <button class="sbtn"><svg class="ico" viewBox="0 0 24 24"><use href="#l-compass"/></svg></button>
            <button class="sbtn"><svg class="ico" viewBox="0 0 24 24"><use href="#l-bars"/></svg></button>
            <button class="sbtn"><svg class="ico" viewBox="0 0 24 24"><use href="#l-topo"/></svg></button>
            <button class="sbtn"><svg class="ico" viewBox="0 0 24 24"><use href="#l-square"/></svg></button>
        </div>
        <div class="canvas">
            <svg id="map" class="map"></svg>
        </div>
    </div>

    <div class="statusbar">
        <span class="ready">Ready</span>
        <button class="toggle-coords"><svg viewBox="0 0 12 18" class="coord-ico"><path d="M6 1v16M3 3c-2 4 6 6 6 10M9 3C7 7 3 9 3 14" fill="none" stroke="#333" stroke-width="1.400"/><circle cx="7" cy="12" r="2.500" fill="none" stroke="#333"/></svg></button>
        <label class="lbl coord-lbl">Coordinate:</label>
        <div class="field coord">-96.67765,32.93508</div>
        <label class="lbl scale-lbl">Scale</label>
        <div class="field combo"><span>1:11,148</span><i class="combo-btn"></i></div>
        <label class="lbl rot-lbl">Rotation:</label>
        <div class="field spin"><span>0.0</span><div class="spin-btns"><i class="up"></i><i class="down"></i></div></div>
        <span class="check">&#10006;</span>
        <label class="lbl render-lbl">Render</label>
        <svg class="crs" viewBox="0 0 16 16"><circle cx="8" cy="8" r="7" fill="#aaa" stroke="#888"/><path d="M1 8h14M8 1v14M3 4c3 1.500 7 1.500 10 0M3 12c3-1.500 7-1.500 10 0" stroke="#e6e6e6" fill="none"/></svg>
        <label class="lbl crs-lbl">EPSG:4326</label>
        <svg class="msg" viewBox="0 0 18 18"><path d="M9 1c5 0 8 3 8 7s-3 6-5 7l1 3-5-3c-4 0-7-3-7-7s3-7 8-7z" fill="#6e6e6e"/></svg>
    </div>
</div>
<script src="map.js"></script>
</body>
</html>
```

FILE: styles.css
```css
* {
    box-sizing: border-box;
}

html, body {
    margin: 0;
    height: 100%;
    overflow: hidden;
}

body {
    background-color: #f0f0f0;
    color: #111;
    font-family: "Liberation Sans", Arial, sans-serif;
    font-size: 11px;
}

.defs {
    position: absolute;
    width: 0;
    height: 0;
}

.app {
    display: flex;
    flex-direction: column;
    height: 100vh;
}

/* window title */
.titlebar {
    display: flex;
    align-items: center;
    flex: 0 0 21px;
    padding-left: 3px;
    border-bottom: 1px solid #e8e8e8;
    background-color: #080808;
    background-image:
        radial-gradient(ellipse 150px 30px at 30px 6px, #a8a8a4 30%, rgba(168, 168, 164, 0) 100%),
        radial-gradient(ellipse 26px 13px at 183px 100%, #2f7298, rgba(47, 114, 152, 0)),
        radial-gradient(ellipse 28px 13px at 412px 100%, #4f9f86, rgba(79, 159, 134, 0)),
        radial-gradient(ellipse 20px 11px at 492px 100%, #d8d8d8, rgba(216, 216, 216, 0)),
        radial-gradient(ellipse 26px 10px at 567px 100%, #d0d0d0, rgba(208, 208, 208, 0)),
        radial-gradient(ellipse 24px 10px at 646px 100%, #c8c8c8, rgba(200, 200, 200, 0)),
        radial-gradient(ellipse 26px 13px at 791px 100%, #a83a45, rgba(168, 58, 69, 0)),
        radial-gradient(ellipse 18px 10px at 868px 100%, #e0e0e0, rgba(224, 224, 224, 0)),
        radial-gradient(ellipse 18px 10px at 946px 100%, #e0e0e0, rgba(224, 224, 224, 0)),
        radial-gradient(ellipse 12px 7px at 1026px 100%, #3a4f8c, rgba(58, 79, 140, 0)),
        radial-gradient(ellipse 30px 16px at 1026px 100%, #e8e8ee, rgba(232, 232, 238, 0)),
        radial-gradient(ellipse 20px 10px at 1172px 100%, #d8d8d8, rgba(216, 216, 216, 0)),
        radial-gradient(ellipse 20px 7px at 1252px 100%, #6b2a30, rgba(107, 42, 48, 0)),
        linear-gradient(to right, rgba(0, 0, 0, 0) 1760px, #666 1820px);
}

.logo {
    width: 14px;
    height: 17px;
}

.title {
    margin-left: 3px;
    font-size: 12px;
    color: #0a0a0a;
}

.winbtns {
    display: flex;
    align-self: flex-start;
    height: 17px;
    margin-left: auto;
    margin-right: 2px;
    border: 1px solid #444;
    border-top: none;
    border-radius: 0 0 4px 4px;
}

.winbtn {
    display: flex;
    align-items: center;
    justify-content: center;
    width: 27px;
    border-right: 1px solid #777;
    background: linear-gradient(to bottom, #aaa 0%, #888 50%, #333 60%, #555 100%);
}

.winbtn.close {
    width: 48px;
    border-right: none;
    border-radius: 0 0 4px 0;
    color: #f4f4f4;
    font-size: 12px;
    text-shadow: 0 0 1px #333;
    background: linear-gradient(to bottom, #d98a80 0%, #cc7060 50%, #b53518 60%, #c85a40 100%);
}

.min-glyph {
    width: 11px;
    height: 4px;
    margin-top: 3px;
    background-color: #f4f4f4;
}

.max-glyph {
    width: 10px;
    height: 10px;
    border: 2px solid #f0f0f0;
    box-shadow: 2px -2px 0 -1px #ddd;
    background-color: #555;
}

/* menu */
.menubar {
    display: flex;
    align-items: center;
    gap: 13.8px;
    flex: 0 0 24px;
    padding-left: 8px;
    border-bottom: 1px solid #bcbcbc;
}

/* toolbars */
.toolbar {
    display: flex;
    align-items: center;
    flex: 0 0 39px;
    border-bottom: 1px solid #bcbcbc;
    box-shadow: inset 0 1px 0 #fafafa;
}

.tbtn, .sbtn {
    display: flex;
    align-items: center;
    justify-content: center;
    flex: none;
    width: 35px;
    height: 32px;
    padding: 0;
    border: 1px solid transparent;
    border-radius: 2px;
    background: none;
}

.tbtn.active {
    border-color: #8e8e8e;
    background-color: #e3e3e3;
    box-shadow: inset 0 0 2px #fff;
}

.tbtn.checked {
    width: 25px;
    height: 20px;
    margin: 0 5px;
    border-color: #8fb6e0;
    border-radius: 0;
    background-color: #dbe9f7;
}

.ico {
    flex: none;
    width: 24px;
    height: 24px;
}

.grip {
    flex: none;
    width: 4px;
    height: 30px;
    margin: 0 2px 0 8px;
    background-image: radial-gradient(circle, #c4c4c4 1px, rgba(0, 0, 0, 0) 1.2px);
    background-size: 3px 4px;
}

.grip.first {
    margin-left: 4px;
}

.vsep {
    flex: none;
    width: 1px;
    height: 34px;
    margin: 0 1.5px;
    background-color: #bbb;
}

.arrow {
    flex: none;
    width: 0;
    height: 0;
    margin: 0 1px 0 -1px;
    border-left: 6px solid transparent;
    border-right: 6px solid transparent;
    border-top: 6px solid #000;
    transform: scaleX(.85);
}

.arrow.off {
    border-top-color: #aaa;
}

/* workspace */
.workspace {
    display: flex;
    flex: 1;
    min-height: 0;
}

.sidebar {
    display: flex;
    flex-direction: column;
    flex: 0 0 51px;
    border-right: 1px solid #a0a0a0;
}

.sbtn {
    justify-content: flex-start;
    width: 50px;
    height: 34px;
    padding-left: 12px;
}

.sbtn .arrow {
    margin: 0 0 0 -1px;
}

.hgrip {
    flex: none;
    height: 3px;
    margin: 8px 6px 2.5px;
    background-image: radial-gradient(circle, #c4c4c4 1px, rgba(0, 0, 0, 0) 1.2px);
    background-size: 4px 3px;
}

.hgrip.top {
    margin-top: 7px;
    margin-bottom: 0;
}

.canvas {
    flex: 1;
    min-width: 0;
    border: 2px solid #4a97e0;
    border-right-width: 1px;
    background-color: #fff;
}

.map {
    display: block;
    width: 100%;
    height: 100%;
}

.cells {
    fill: #d6cd69;
}

.edges {
    fill: none;
    stroke: #111;
    stroke-width: 1;
}

/* status bar */
.statusbar {
    display: flex;
    align-items: center;
    flex: 0 0 30px;
    padding-left: 4px;
}

.lbl {
    flex: none;
}

.ready {
    flex: 1;
}

.toggle-coords {
    display: flex;
    align-items: center;
    justify-content: center;
    flex: none;
    width: 21px;
    height: 22px;
    padding: 0;
    border: 1px solid #aaa;
    border-radius: 3px;
    background-color: #e6e6e6;
}

.coord-ico {
    width: 12px;
    height: 18px;
}

.coord-lbl {
    margin: 0 10px 0 8px;
}

.field {
    display: flex;
    align-items: center;
    flex: none;
    height: 20px;
    border: 1px solid #b8b8b8;
    border-radius: 2px;
    background-color: #fff;
}

.coord {
    justify-content: center;
    width: 299px;
}

.scale-lbl {
    margin: 0 12px 0 9px;
}

.combo {
    justify-content: space-between;
    width: 89px;
    padding-left: 4px;
}

.combo-btn {
    position: relative;
    flex: none;
    width: 16px;
    height: 18px;
    border-left: 1px solid #b8b8b8;
    background-color: #ececec;
}

.combo-btn::after, .up::after, .down::after {
    content: "";
    position: absolute;
    left: 4px;
    top: 7px;
    border-left: 3.5px solid transparent;
    border-right: 3.5px solid transparent;
    border-top: 4px solid #111;
}

.rot-lbl {
    margin: 0 10px 0 8px;
}

.spin {
    justify-content: space-between;
    width: 96px;
    height: 24px;
    padding-left: 4px;
}

.spin-btns {
    display: flex;
    flex-direction: column;
    flex: none;
    width: 15px;
    height: 100%;
    border-left: 1px solid #d0d0d0;
}

.up, .down {
    position: relative;
    flex: 1;
    background-color: #f2f2f2;
}

.up::after {
    top: 3px;
    border-top: none;
    border-bottom: 4px solid #111;
}

.down::after {
    top: 4px;
}

.check {
    display: flex;
    align-items: center;
    justify-content: center;
    flex: none;
    width: 13px;
    height: 13px;
    margin-left: 7px;
    background-color: #f4f4f4;
    border: 1px solid #ccc;
    color: #000;
    font-size: 11px;
    font-weight: bold;
}

.render-lbl {
    margin-left: 4px;
}

.crs {
    flex: none;
    width: 15px;
    height: 15px;
    margin-left: 19px;
}

.crs-lbl {
    margin-left: 4px;
}

.msg {
    flex: none;
    width: 18px;
    height: 18px;
    margin: 0 14px 0 15px;
}

/* icon text */
.ic-abc, .ic-tiny, .ic-csw, .ic-t, .ic-info, .ic-help, .ic-what, .ic-eps {
    text-anchor: middle;
}

.ic-abc {
    font: bold 8.5px "Liberation Sans", sans-serif;
    fill: #222;
}

.ic-off {
    fill: #777;
}

.ic-tiny {
    font: bold 8px "Liberation Sans", sans-serif;
    fill: #888;
}

.ic-csw {
    font: 8px "Liberation Mono", monospace;
    fill: #333;
}

.ic-t {
    font: bold 13px "Liberation Serif", serif;
    fill: #555;
}

.ic-info {
    font: italic bold 14px "Liberation Serif", serif;
    fill: #fff;
}

.ic-help {
    font: bold 15px "Liberation Sans", sans-serif;
    fill: #fff;
}

.ic-what {
    font: bold 22px "Liberation Serif", serif;
    fill: #111;
}

.ic-eps {
    font: 24px "Liberation Serif", serif;
    fill: #6b3f85;
}
```

FILE: map.js
```js
// filled grid cells of the layer, row: [from col, to col, from col, to col ...]
var rows = {
    0: [32, 34, 37, 39],
    1: [32, 35],
    2: [32, 36],
    3: [32, 38],
    4: [35, 40],
    8: [45, 47],
    9: [45, 48, 51, 52],
    10: [44, 51],
    11: [44, 47, 48, 51, 68, 70],
    12: [46, 51],
    13: [49, 50],
    14: [50, 51],
    15: [4, 7, 49, 53],
    16: [3, 5, 49, 54],
    17: [1, 3, 22, 23, 48, 51, 53, 54],
    18: [49, 51, 52, 53, 56, 58],
    19: [49, 53, 56, 59],
    20: [0, 1, 48, 50, 52, 60],
    21: [0, 1, 3, 5, 11, 12, 31, 33, 47, 51, 52, 54, 56, 58],
    22: [1, 5, 26, 28, 47, 48, 49, 51, 52, 59],
    23: [2, 5, 9, 12, 16, 18, 20, 21, 22, 23, 28, 32, 50, 51, 52, 58],
    24: [3, 5, 9, 10, 12, 14, 17, 19, 20, 25, 29, 32, 55, 57],
    25: [5, 6, 8, 10, 12, 18, 28, 29, 30, 32, 35, 36],
    26: [6, 9, 10, 15, 22, 24],
    27: [4, 5, 7, 12, 14, 15, 22, 24],
    28: [10, 11, 12, 24, 29, 30, 32, 33],
    29: [9, 10, 14, 25, 28, 31],
    30: [9, 10, 12, 14, 18, 20, 22, 25],
    31: [10, 15, 16, 18],
    32: [12, 13, 14, 16, 17, 18],
    33: [14, 15, 18, 20],
    34: [10, 16, 17, 19],
    35: [10, 16],
    36: [10, 15],
    37: [12, 14, 16, 17],
    38: [16, 17]
};

// screen position of the grid, inside the canvas
var originX = 142.5 - 53;
var originY = 145.6 - 125;
var cellW = 24.07;
var cellH = 21.55;

function isFilled(col, row) {
    var spans = rows[row];
    if (!spans) return false;
    for (var i = 0; i < spans.length; i += 2) {
        if (col >= spans[i] && col < spans[i + 1]) return true;
    }
    return false;
}

function px(col) {
    return (originX + col * cellW).toFixed(2);
}

function py(row) {
    return (originY + row * cellH).toFixed(2);
}

function drawMap() {
    var cells = "";
    var edges = "";
    for (var row = 0; row < 39; row++) {
        for (var col = 0; col < 71; col++) {
            if (!isFilled(col, row)) continue;
            cells += "M" + px(col) + " " + py(row) + "H" + px(col + 1) + "V" + py(row + 1) + "H" + px(col) + "Z";
            if (!isFilled(col, row - 1)) edges += "M" + px(col) + " " + py(row) + "H" + px(col + 1);
            if (!isFilled(col, row + 1)) edges += "M" + px(col) + " " + py(row + 1) + "H" + px(col + 1);
            if (!isFilled(col - 1, row)) edges += "M" + px(col) + " " + py(row) + "V" + py(row + 1);
            if (!isFilled(col + 1, row)) edges += "M" + px(col + 1) + " " + py(row) + "V" + py(row + 1);
        }
    }
    document.getElementById("map").innerHTML =
        '<path class="cells" d="' + cells + '"/><path class="edges" d="' + edges + '"/>';
}

drawMap();
```
